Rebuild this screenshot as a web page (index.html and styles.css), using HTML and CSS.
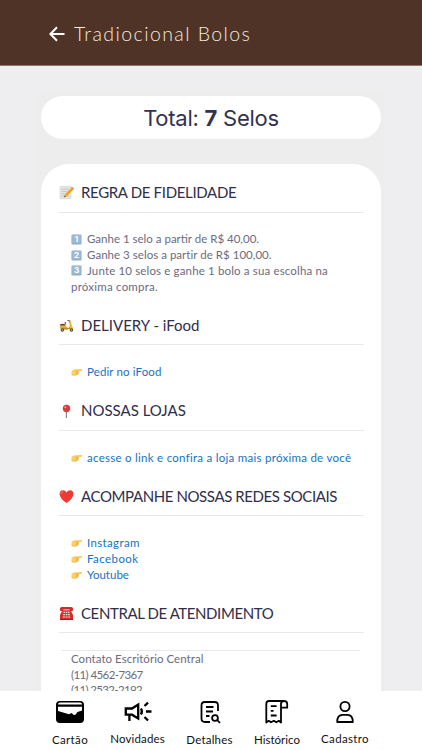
FILE: index.html
```html
<!DOCTYPE html>
<html lang="pt-BR">
<head>
<meta charset="utf-8">
<title>Tradiocional Bolos</title>
<link rel="stylesheet" href="styles.css">
</head>
<body>
<svg width="0" height="0" class="defs">
  <symbol id="hand" viewBox="0 0 12 10">
    <path d="M.5 4Q2 2.4 4 2.2L10.7 2.1Q12 2.9 10.7 3.8L7.8 4.2Q8.5 5 7.7 5.8Q8 6.7 7.1 7.1Q7 8 5.7 8.1L2.7 8Q1.2 7.7.5 8Z" fill="#fbcf60"/>
    <path d="M4.4 4.2H7.7M5 5.8H7.6M4.9 7.1H7M.6 7.9Q3 8.5 5.7 8.1" stroke="#dc9c38" stroke-width=".6" fill="none"/>
  </symbol>
  <symbol id="key" viewBox="0 0 12 12">
    <rect x=".5" y=".5" width="11" height="11" rx="1.4" fill="#8aabc6"/>
    <rect x="1.2" y="1" width="9.6" height="9.3" rx="1" fill="#9dbad1"/>
  </symbol>
</svg>
<div class="app">
  <header class="topbar">
    <svg class="back" viewBox="0 0 16 16"><path d="M8 1.2L1.4 8L8 14.8M1.6 8H15.5" fill="none" stroke="#fff" stroke-width="2"/></svg>
    <h1>Tradiocional Bolos</h1>
  </header>
  <main class="content">
    <div class="total"><span>Total: <b>7</b> Selos</span></div>
    <div class="card">
      <section>
        <h2><svg class="emoji" viewBox="0 0 15 15"><rect x="1" y="1.3" width="11" height="12.5" rx=".6" fill="#e5e7e6" stroke="#c8cbca" stroke-width=".5"/><path d="M2.5 4H10M2.5 6.3H8M2.5 8.6H6M2.5 11H10" stroke="#b4b8b8" stroke-width=".7"/><path d="M5.2 12.2L6 9L12 2.8L14.2 5L8.1 11.2Z" fill="#f5b52d"/><path d="M7 10.1L13 4" stroke="#d98217" stroke-width=".8"/><path d="M12 2.8L13 1.8L15 3.8L14.2 5Z" fill="#dd7772"/><path d="M5.2 12.2L5.7 10.5L7 11.7Z" fill="#443b32"/></svg><span class="h-regra">REGRA DE FIDELIDADE</span></h2>
        <ul>
          <li><span class="keycap"><svg viewBox="0 0 12 12"><use href="#key"/></svg><i>1</i></span><span class="t1">Ganhe 1 selo a partir de R$ 40,00.</span></li>
          <li><span class="keycap"><svg viewBox="0 0 12 12"><use href="#key"/></svg><i>2</i></span><span class="t2">Ganhe 3 selos a partir de R$ 100,00.</span></li>
          <li><span class="keycap"><svg viewBox="0 0 12 12"><use href="#key"/></svg><i>3</i></span><span class="t3">Junte 10 selos e ganhe 1 bolo a sua escolha na</span></li>
          <li><span class="t4">próxima compra.</span></li>
        </ul>
      </section>
      <section>
        <h2><svg class="emoji" viewBox="0 0 15 15"><path d="M1 7.3Q3 5.8 7 7.2L8 10H10L10.7 7L9.5 3L11.5 2.8L13 8L14.5 11H9L8.5 12H3L.7 10Z" fill="#edb62d"/><path d="M1 6.5Q3.5 5.2 6.5 6.5L6 7.4H1.2Z" fill="#59453a"/><path d="M8.4 2.4L11.3 3" stroke="#655b50" stroke-width="1"/><path d="M6.2 4L6.6 6.5" stroke="#b56947" stroke-width="1.5"/><path d="M3 10.2H11" stroke="#9c751c" stroke-width=".8"/><circle cx="3.3" cy="12" r="1.8" fill="#4b4945"/><circle cx="12.4" cy="12" r="1.8" fill="#4b4945"/><circle cx="3.3" cy="12" r=".7" fill="#c2c0bb"/><circle cx="12.4" cy="12" r=".7" fill="#c2c0bb"/></svg><span class="h-delivery">DELIVERY - iFood</span></h2>
        <ul>
          <li><svg class="hand"><use href="#hand"/></svg><a class="t5">Pedir no iFood</a></li>
        </ul>
      </section>
      <section>
        <h2><svg class="emoji" viewBox="0 0 15 15"><path d="M7.4 7V14" stroke="#87888d" stroke-width="1.2"/><circle cx="7.5" cy="4.5" r="3.7" fill="#db3c3b"/><circle cx="6.3" cy="3.2" r="1" fill="#f59c94"/></svg><span class="h-lojas">NOSSAS LOJAS</span></h2>
        <ul>
          <li><svg class="hand"><use href="#hand"/></svg><a class="t6">acesse o link e confira a loja mais próxima de você</a></li>
        </ul>
      </section>
      <section>
        <h2><svg class="emoji" viewBox="0 0 15 15"><path d="M7.5 14Q.7 9.5.6 5Q.7 1.5 3.8 1.3Q6.5 1.3 7.5 3.5Q8.5 1.3 11.2 1.3Q14.3 1.5 14.4 5Q14.3 9.5 7.5 14Z" fill="#ee3935"/><path d="M2 4.8Q2.1 2.7 4 2.6" stroke="#ff8174" fill="none"/></svg><span class="h-redes">ACOMPANHE NOSSAS REDES SOCIAIS</span></h2>
        <ul>
          <li><svg class="hand"><use href="#hand"/></svg><a class="t7">Instagram</a></li>
          <li><svg class="hand"><use href="#hand"/></svg><a class="t8">Facebook</a></li>
          <li><svg class="hand"><use href="#hand"/></svg><a class="t9">Youtube</a></li>
        </ul>
      </section>
      <section>
        <h2><svg class="emoji" viewBox="0 0 15 15"><path d="M1 4Q.5 1 3 1H12Q14.5 1 14 4L13.6 5H11L10.5 3.5H4.5L4 5H1.4Z" fill="#d42a2b"/><path d="M3.3 4.2H11.7L14 9V14H1V9Z" fill="#da2d2e"/><path d="M4.5 6.4H6M6.8 6.4H8.3M9 6.4H10.5M4.2 8.7H5.9M6.7 8.7H8.4M9.1 8.7H10.8M3.9 11H5.8M6.6 11H8.5M9.2 11H11" stroke="#ffe4df" stroke-width="1.2"/><path d="M1 13.5H14" stroke="#a51c20"/></svg><span class="h-central">CENTRAL DE ATENDIMENTO</span></h2>
        <div class="contact">
          <p class="t10">Contato Escritório Central</p>
          <p class="t11">(11) 4562-7367</p>
          <p class="t12">(11) 2532-2192</p>
        </div>
      </section>
    </div>
  </main>
  <nav class="tabs">
    <div class="tab"><svg viewBox="0 0 28 28"><path fill-rule="evenodd" d="M4 3H24Q28 3 28 7V21Q28 25 24 25H4Q0 25 0 21V7Q0 3 4 3ZM4 4.6Q2 4.6 2 6.4H26Q26 4.6 24 4.6ZM2 8.8V13L13 16.3L15.5 15L17.5 16.8Q19 17.3 20 16L21.5 14L26 12.6V8.8Z"/></svg><span class="n1">Cartão</span></div>
    <div class="tab up"><svg viewBox="0 0 28 28"><path d="M1.8 10.5H8L14.2 6.5V20.5L8 16.7H1.8ZM5.4 17V23M17 10.5Q18.8 13.5 17 16.5M20.5 8L24 4.6M22 13.5H27.5M20.5 19L24 22.5" fill="none" stroke="#000" stroke-width="2.3"/></svg><span class="n2">Novidades</span></div>
    <div class="tab"><svg viewBox="0 0 28 28"><path d="M22 13V7.5Q22 4 18.5 4H9Q5.5 4 5.5 7.5V20.5Q5.5 24 9 24H14M10 9H17.5M10 13.5H17M10 18H13.5" fill="none" stroke="#000" stroke-width="1.8"/><circle cx="19" cy="20" r="2.9" fill="none" stroke="#000" stroke-width="1.8"/><path d="M21.3 22.2L24 25" stroke="#000" stroke-width="1.8"/></svg><span class="n3">Detalhes</span></div>
    <div class="tab"><svg viewBox="0 0 28 28"><path d="M21.2 3H6Q3.3 3 3.3 6V24.5L5.7 22.8L8 24.3L10.8 22.8L13.3 24.3L15.8 22.8L18 24.5V6Q18 3 21 3Q24.2 3 24.2 6V9.7H18M7.8 8.2H13.6M7.8 12.8H10.5M7.8 17.5H13.6" fill="none" stroke="#000" stroke-width="1.8" stroke-linejoin="round"/></svg><span class="n4">Histórico</span></div>
    <div class="tab up"><svg viewBox="0 0 28 28"><circle cx="14" cy="8.5" r="4.6" fill="none" stroke="#000" stroke-width="1.8"/><path d="M6.2 24Q6.2 16.8 11.5 16.8H16.5Q21.8 16.8 21.8 24Z" fill="none" stroke="#000" stroke-width="1.8" stroke-linejoin="round"/></svg><span class="n5">Cadastro</span></div>
  </nav>
</div>
</body>
</html>
```
FILE: styles.css
```css
* { box-sizing: border-box; }
body { margin: 0; font-family: Lato, sans-serif; }
.defs { display: block; }
.app { height: 750px; display: flex; flex-direction: column; background: #eeeef0; overflow: hidden; }
.topbar { flex: none; height: 66px; background: #4e3326; border-bottom: 1px solid #8d776e; display: flex; align-items: center; padding: 2px 0 0 49px; }
.back { width: 16px; height: 16px; margin-right: 9px; }
h1 { margin: 0; font-size: 19.5px; font-weight: 300; color: #f7e8df; letter-spacing: 1.42px; white-space: nowrap; }
.content { flex: 1; min-height: 0; overflow: hidden; margin: 25px 38px 0; padding: 5px 3px 0; background: #ededed; }
.total { height: 43px; border-radius: 22px; background: #fff; display: flex; align-items: center; justify-content: center; font: 22px Inter, sans-serif; letter-spacing: -.25px; color: #33324f; }
.total b { font-weight: 700; }
.card { margin-top: 25px; height: 640px; background: #fff; border-radius: 28px; padding: 10px 17px 0 18px; }
h2 { margin: 0; height: 38.5px; border-bottom: 1px solid #e9e9ec; display: flex; align-items: center; font-size: 15px; font-weight: 400; color: #302e49; white-space: nowrap; }
h2 span { margin-top: -2px; }
.emoji { width: 15px; height: 15px; margin-right: 7px; }
ul { list-style: none; margin: 0; padding: 19px 0 12.2px 12px; }
li { display: flex; align-items: center; height: 15.8px; font-size: 11.5px; color: #6c6b80; white-space: nowrap; }
li > span:last-child, li > a { margin-top: -1px; }
a { color: #1971bf; }
.hand { width: 12px; height: 10px; margin-right: 4px; }
.keycap { display: grid; width: 11px; height: 11px; margin-right: 5px; }
.keycap svg, .keycap i { grid-area: 1 / 1; width: 11px; height: 11px; }
.keycap i { font: bold 8px/11px Inter, sans-serif; text-align: center; color: #fff; z-index: 1; }
.contact { margin: 17px 4px 0 2px; border-top: 1px solid #e9e9ec; padding: 0 0 0 10px; font-size: 11.5px; line-height: 15.5px; color: #6c6b80; }
.contact p { margin: 0; white-space: nowrap; }
.h-regra { letter-spacing: -.33px; }
.h-redes { letter-spacing: -.4px; }
.h-central { letter-spacing: -.4px; }
.t2 { letter-spacing: .03px; }
.t3 { letter-spacing: .15px; }
.t4 { letter-spacing: .22px; }
.t5 { letter-spacing: .12px; }
.t6 { letter-spacing: .27px; }
.t7 { letter-spacing: .35px; }
.t8 { letter-spacing: .42px; }
.t10 { letter-spacing: .04px; }
.t11 { letter-spacing: -.6px; }
.t12 { letter-spacing: -.65px; }
.n1 { letter-spacing: .35px; }
.n2 { letter-spacing: .15px; }
.n3 { letter-spacing: .2px; }
.n5 { letter-spacing: .35px; }
.tabs { flex: none; height: 59px; background: #fff; display: grid; grid-template-columns: 68px 67px 77px 58px 78px; padding-left: 36px; z-index: 1; }
.tab { padding-top: 7px; display: flex; flex-direction: column; align-items: center; font-size: 11.5px; line-height: 14px; color: #111; }
.tab svg { width: 28px; height: 28px; margin-bottom: 7px; }
.tab.up span { margin-top: -1px; }
```
